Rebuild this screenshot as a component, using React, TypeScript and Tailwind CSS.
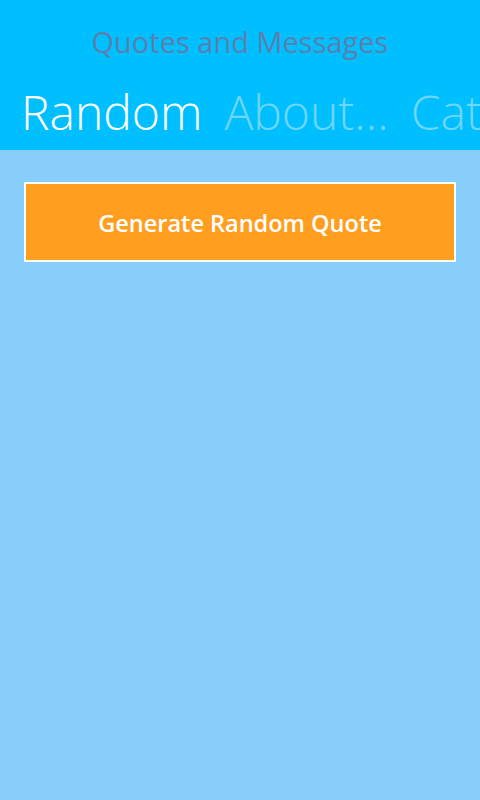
export default function App() {
  return (
    <div className="flex h-[800px] w-[480px] flex-col overflow-hidden bg-[#87cefa] font-['Open_Sans','Noto_Sans',sans-serif]">
      <header className="h-[150px] shrink-0 overflow-hidden bg-[#00bfff]">
        <h1 className="pt-[24px] text-center text-[29px] leading-[36px] text-[#5b7fae]">
          Quotes and Messages
        </h1>
        <nav className="mt-[20px] flex gap-[22px] overflow-hidden whitespace-nowrap pl-[21px] text-[48px] font-light leading-[64px]">
          <span className="text-white">Random</span>
          <span className="text-[#6fd6fb]">About...</span>
          <span className="text-[#6fd6fb]">Categories</span>
        </nav>
      </header>
      <main className="px-[24px] pt-[32px]">
        <button className="flex h-[80px] w-full items-center justify-center border-2 border-white bg-[#ff9e1f] pt-[4px] text-[23.5px] font-semibold text-white">
          Generate Random Quote
        </button>
      </main>
    </div>
  );
}
